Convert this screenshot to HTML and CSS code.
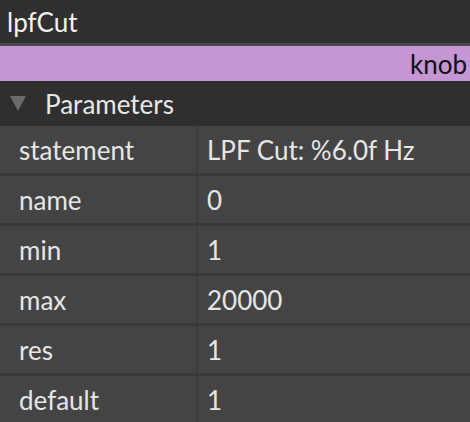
FILE: index.html
```html
<!DOCTYPE html>
<html>
<head>
<meta charset="utf-8">
<link rel="stylesheet" href="styles.css">
</head>
<body>
<div class="panel">
  <div class="title">lpfCut</div>
  <div class="type">knob</div>
  <div class="section">
    <svg class="tri" width="16" height="15" viewBox="0 0 16 15"><polygon points="0,0 16,0 8,15" fill="#6a6a6a"/></svg>
    <span class="section-label">Parameters</span>
  </div>
  <div class="params">
    <div class="row"><div class="key">statement</div><div class="val">LPF Cut: %6.0f Hz</div></div>
    <div class="row"><div class="key">name</div><div class="val">0</div></div>
    <div class="row"><div class="key">min</div><div class="val">1</div></div>
    <div class="row"><div class="key">max</div><div class="val">20000</div></div>
    <div class="row"><div class="key">res</div><div class="val">1</div></div>
    <div class="row"><div class="key">default</div><div class="val">1</div></div>
  </div>
</div>
</body>
</html>
```
FILE: styles.css
```css
html, body {
  margin: 0;
  padding: 0;
  background: #2f2f2f;
  overflow: hidden;
}
.panel {
  width: 470px;
  font-family: Lato, "Open Sans", sans-serif;
  font-size: 26px;
  color: #e6e6e6;
}
.title {
  height: 43px;
  display: flex;
  align-items: center;
  padding-left: 7px;
  background: #2f2f2f;
  border-bottom: 3px solid #4a4a4a;
  color: #f2f2f2;
}
.type {
  height: 35px;
  background: #c695d4;
  color: #111;
  display: flex;
  align-items: center;
  justify-content: flex-end;
  padding-right: 3px;
}
.section {
  height: 45px;
  display: flex;
  align-items: center;
  background: #2f2f2f;
}
.tri {
  margin-left: 10px;
  margin-right: 19px;
  flex: none;
}
.section-label {
  color: #e8e8e8;
}
.params {
  display: flex;
  flex-direction: column;
}
.row {
  display: grid;
  grid-template-columns: 198px 1fr;
  height: 47px;
  background: #444444;
  border-bottom: 3px solid #393939;
}
.key {
  display: flex;
  align-items: center;
  padding-left: 19px;
  border-right: 2px solid #3d3d3d;
}
.val {
  display: flex;
  align-items: center;
  padding-left: 9px;
}
```
